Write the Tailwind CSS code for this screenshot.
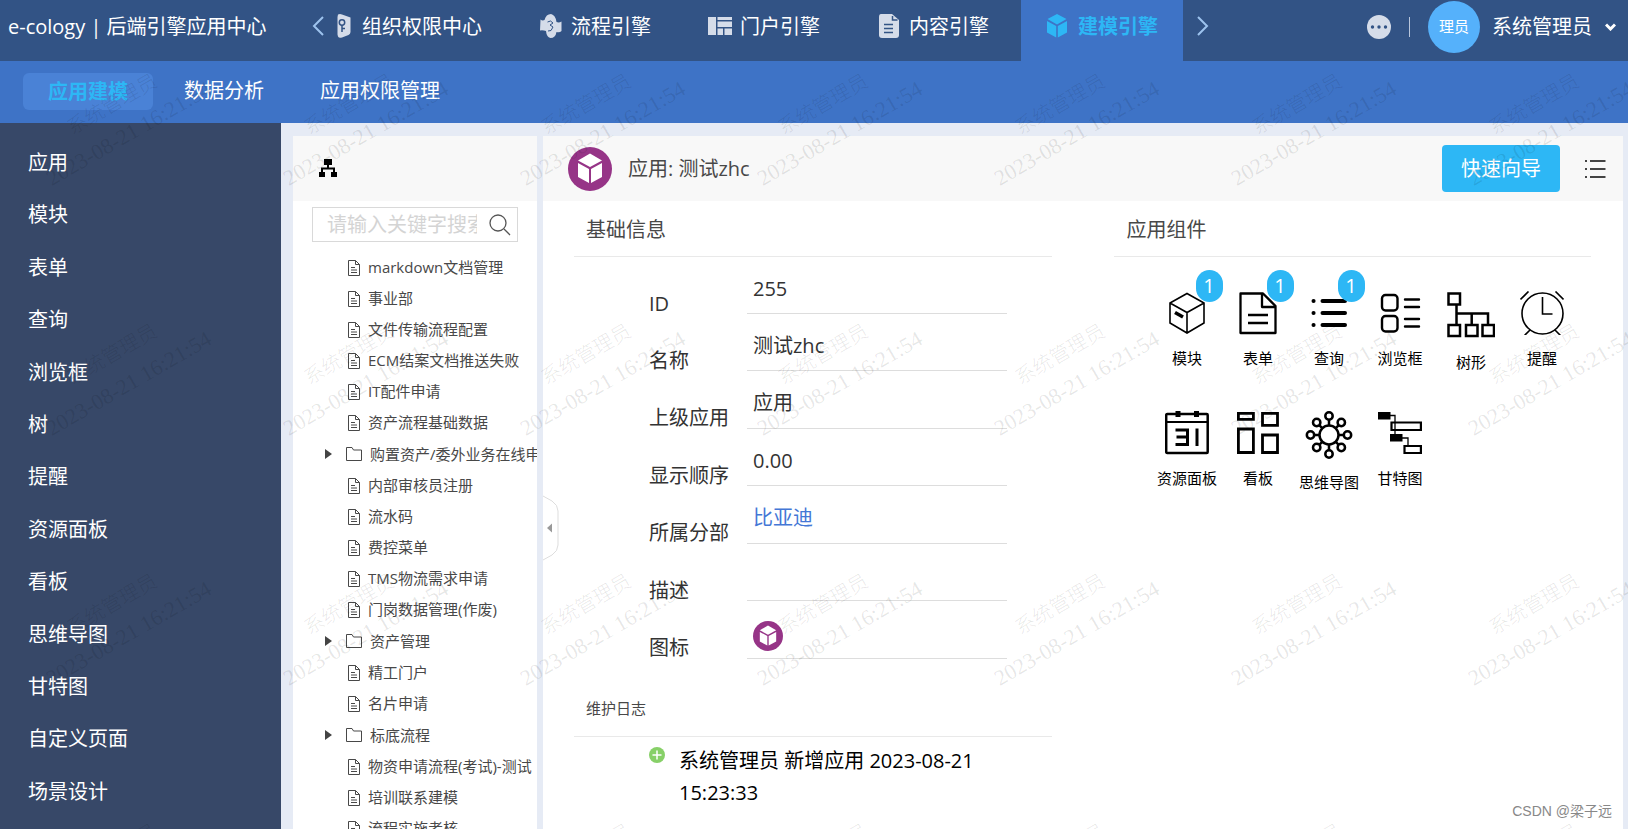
<!DOCTYPE html>
<html lang="zh-CN">
<head>
<meta charset="utf-8">
<meta name="viewport" content="width=device-width, initial-scale=1">
<title>e-cology | 后端引擎应用中心</title>
<script src="https://cdn.jsdelivr.net/npm/@tailwindcss/browser@4"></script>
</head>
<body class="relative flex h-screen flex-col overflow-hidden bg-[#e6ebf5] font-['Open_Sans','Noto_Sans_CJK_SC',sans-serif] text-xl text-[#333]">

<svg class="hidden" aria-hidden="true">
  <symbol id="doc" viewBox="0 0 12 16"><path d="M.5.5h7l4 4v11H.5zM7.5.5v4h4M3 7.5h4M3 10h6M3 12.5h6" fill="none" stroke="currentColor"/></symbol>
  <symbol id="folder" viewBox="0 0 16 14"><path d="M.5 13.500V.5h5.500l1.500 2.500h8v10.500z" fill="none" stroke="currentColor" stroke-linejoin="round"/></symbol>
  <symbol id="cube" viewBox="0 0 44 44"><circle cx="22" cy="22" r="22" fill="#963487"/><path d="M22 6.500 34 13.500 22 20 10 13.500zM10 16l11 6v14l-11-6zM34 16l-11 6v14l11-6z" fill="#fff"/></symbol>
</svg>

<header class="flex h-[61px] shrink-0 bg-[#325385] text-white">
  <h1 class="w-[306px] shrink-0 pl-2 leading-[54px] whitespace-nowrap">e-cology | 后端引擎应用中心</h1>
  <button type="button" aria-label="向左" class="flex h-[52px] w-6 shrink-0 items-center pl-1.5 text-[#9dc3ee]">
    <svg class="h-5 w-3" viewBox="0 0 12 20" fill="none" stroke="currentColor" stroke-width="2"><path d="M11 1 2 10l9 9"/></svg>
  </button>
  <nav class="flex shrink-0 gap-[7px] leading-[54px]">
    <a href="#" class="flex gap-2 pr-[25px]">
      <svg class="mt-[14px] size-6" viewBox="0 0 24 24"><path d="M8 .5q2-1 4 0l8.500 3V18q0 2-2 3L12 23.500q-3 1-4-1l-.5-2V3z" fill="#d5dce9"/><g fill="none" stroke="#325385" stroke-width="1.500"><circle cx="12" cy="8.500" r="2.700"/><path d="M12 11v7M12 14.500h3"/></g></svg>组织权限中心</a>
    <a href="#" class="flex gap-2 px-[25px]">
      <svg class="mt-[14px] size-6" viewBox="0 0 24 24"><path d="M1.500 5.500q2 1.500 4 .5Q7 0 12 0q4.500 1 5.500 8 2.500 1 5-.5V17q-2 2-5 1-1 6-6 6-4-1-4.500-7-3-1-6-.5z" fill="#d5dce9"/><path d="m8.500 8 3-1 2.500 2-3 2 3 2-2 3.500-3 .5" fill="none" stroke="#325385"/></svg>流程引擎</a>
    <a href="#" class="flex gap-2 px-[25px]">
      <svg class="mt-[14px] size-6" viewBox="0 0 24 24" fill="#d5dce9"><path d="M0 3h8v18H0zM9.500 3H24v3H9.500zM9.500 7.500H24V13H9.500zM9.500 14.500H15V21H9.500zM16.500 14.500H24V21h-7.500z"/></svg>门户引擎</a>
    <a href="#" class="flex gap-2 px-[25px]">
      <svg class="mt-[14px] size-6" viewBox="0 0 24 24"><path d="M4 0h11l7 6v15q0 3-3 3H5q-3 0-3-3V3q0-3 2-3z" fill="#d5dce9"/><path d="M15.500 2v4h5M7 10.500h9M7 14.500h9M7 18.500h9" fill="none" stroke="#325385" stroke-width="1.500"/></svg>内容引擎</a>
    <a href="#" aria-current="page" class="flex gap-2 bg-[#3e73c6] px-[25px] font-bold text-[#2db7f5]">
      <svg class="mt-[14px] size-6" viewBox="0 0 24 24" fill="currentColor"><path d="M11 0l9.500 5L11 10.500 1.500 5zM1 7l9.200 5v11.500L1 18.500zM21 7l-9.200 5v11.500l9.200-5z"/></svg>建模引擎</a>
  </nav>
  <button type="button" aria-label="向右" class="flex h-[52px] shrink-0 items-center pl-[14px] text-[#9dc3ee]">
    <svg class="h-5 w-3" viewBox="0 0 12 20" fill="none" stroke="currentColor" stroke-width="2"><path d="m1 1 9 9-9 9"/></svg>
  </button>
  <div class="ml-auto flex h-[53px] shrink-0 items-center pr-3">
    <button type="button" aria-label="更多"><svg class="size-6" viewBox="0 0 24 24"><circle cx="12" cy="12" r="12" fill="#d5dce9"/><g fill="#325385"><circle cx="5.500" cy="12" r="1.700"/><circle cx="12" cy="12" r="1.700"/><circle cx="18.500" cy="12" r="1.700"/></g></svg></button>
    <span class="mx-[18px] h-5 w-px bg-[#b9c6dc]"></span>
    <span class="mr-3 flex size-[52px] items-center justify-center rounded-full bg-[#55b1fb] text-[15px]">理员</span>
    <button type="button" class="flex items-center gap-[13px]">系统管理员
      <svg class="h-2 w-[11px]" viewBox="0 0 11 8" fill="none" stroke="#fff" stroke-width="3"><path d="m1 1.500 4.500 4.500L10 1.500"/></svg></button>
  </div>
</header>

<nav class="flex h-[62px] shrink-0 items-center gap-1.5 bg-[#3e73c6] pr-6 pb-0.5 pl-[23px] text-white">
  <a href="#" aria-current="page" class="rounded-md bg-[#4a82d6] px-[25px] leading-[37px] font-bold text-[#2db7f5]">应用建模</a>
  <a href="#" class="px-[25px]">数据分析</a>
  <a href="#" class="px-[25px]">应用权限管理</a>
</nav>

<div class="flex min-h-0 flex-1">
  <aside class="w-[281px] shrink-0 bg-[#374868] text-white">
    <nav class="flex h-full flex-col justify-between pt-[25px] pb-[22px] pl-7 leading-[30px]">
      <a href="#">应用</a><a href="#">模块</a><a href="#">表单</a><a href="#">查询</a><a href="#">浏览框</a><a href="#">树</a><a href="#">提醒</a><a href="#">资源面板</a><a href="#">看板</a><a href="#">思维导图</a><a href="#">甘特图</a><a href="#">自定义页面</a><a href="#">场景设计</a>
    </nav>
  </aside>

  <section class="mt-[13px] ml-3 flex w-[244px] shrink-0 flex-col overflow-hidden bg-white">
    <div class="flex h-[65px] shrink-0 items-center bg-[#f8f8f8] pb-0.5 pl-[26px]">
      <svg class="size-[18px] text-black" viewBox="0 0 18 18" fill="currentColor"><path d="M5 0h8v6h-3v2.500h6V13h2v5h-6v-5h2v-2.500H4V13h2v5H0v-5h2V8.500h6V6H5z"/></svg>
    </div>
    <div class="mx-[19px] mt-1.5 flex h-[35px] shrink-0 items-center border border-[#d9d9d9] pr-1.5 pl-[14px]">
      <input type="text" aria-label="搜索" placeholder="请输入关键字搜索" class="min-w-0 flex-1 outline-none placeholder:text-[#d4d4d4]">
      <button type="button" aria-label="搜索" class="pl-3"><svg class="size-[22px] text-[#555]" viewBox="0 0 22 22" fill="none" stroke="currentColor" stroke-width="1.300"><circle cx="9" cy="9" r="8"/><path d="m15 15 6 6"/></svg></button>
    </div>
    <ul class="mt-[10px] text-[15px] leading-[31px] whitespace-nowrap text-[#484848]">
      <li class="flex h-[31px] items-center gap-2 pl-[55px]"><svg class="h-4 w-3 shrink-0"><use href="#doc"/></svg>markdown文档管理</li>
      <li class="flex h-[31px] items-center gap-2 pl-[55px]"><svg class="h-4 w-3 shrink-0"><use href="#doc"/></svg>事业部</li>
      <li class="flex h-[31px] items-center gap-2 pl-[55px]"><svg class="h-4 w-3 shrink-0"><use href="#doc"/></svg>文件传输流程配置</li>
      <li class="flex h-[31px] items-center gap-2 pl-[55px]"><svg class="h-4 w-3 shrink-0"><use href="#doc"/></svg>ECM结案文档推送失败</li>
      <li class="flex h-[31px] items-center gap-2 pl-[55px]"><svg class="h-4 w-3 shrink-0"><use href="#doc"/></svg>IT配件申请</li>
      <li class="flex h-[31px] items-center gap-2 pl-[55px]"><svg class="h-4 w-3 shrink-0"><use href="#doc"/></svg>资产流程基础数据</li>
      <li class="flex h-8 items-center gap-2 pl-8"><svg class="mr-1.5 h-[10px] w-[7px] shrink-0" viewBox="0 0 7 10"><path d="m0 0 7 5-7 5z" fill="#444"/></svg><svg class="h-[14px] w-4 shrink-0"><use href="#folder"/></svg>购置资产/委外业务在线申请</li>
      <li class="flex h-[31px] items-center gap-2 pl-[55px]"><svg class="h-4 w-3 shrink-0"><use href="#doc"/></svg>内部审核员注册</li>
      <li class="flex h-[31px] items-center gap-2 pl-[55px]"><svg class="h-4 w-3 shrink-0"><use href="#doc"/></svg>流水码</li>
      <li class="flex h-[31px] items-center gap-2 pl-[55px]"><svg class="h-4 w-3 shrink-0"><use href="#doc"/></svg>费控菜单</li>
      <li class="flex h-[31px] items-center gap-2 pl-[55px]"><svg class="h-4 w-3 shrink-0"><use href="#doc"/></svg>TMS物流需求申请</li>
      <li class="flex h-[31px] items-center gap-2 pl-[55px]"><svg class="h-4 w-3 shrink-0"><use href="#doc"/></svg>门岗数据管理(作废)</li>
      <li class="flex h-8 items-center gap-2 pl-8"><svg class="mr-1.5 h-[10px] w-[7px] shrink-0" viewBox="0 0 7 10"><path d="m0 0 7 5-7 5z" fill="#444"/></svg><svg class="h-[14px] w-4 shrink-0"><use href="#folder"/></svg>资产管理</li>
      <li class="flex h-[31px] items-center gap-2 pl-[55px]"><svg class="h-4 w-3 shrink-0"><use href="#doc"/></svg>精工门户</li>
      <li class="flex h-[31px] items-center gap-2 pl-[55px]"><svg class="h-4 w-3 shrink-0"><use href="#doc"/></svg>名片申请</li>
      <li class="flex h-8 items-center gap-2 pl-8"><svg class="mr-1.5 h-[10px] w-[7px] shrink-0" viewBox="0 0 7 10"><path d="m0 0 7 5-7 5z" fill="#444"/></svg><svg class="h-[14px] w-4 shrink-0"><use href="#folder"/></svg>标底流程</li>
      <li class="flex h-[31px] items-center gap-2 pl-[55px]"><svg class="h-4 w-3 shrink-0"><use href="#doc"/></svg>物资申请流程(考试)-测试</li>
      <li class="flex h-[31px] items-center gap-2 pl-[55px]"><svg class="h-4 w-3 shrink-0"><use href="#doc"/></svg>培训联系建模</li>
      <li class="flex h-[31px] items-center gap-2 pl-[55px]"><svg class="h-4 w-3 shrink-0"><use href="#doc"/></svg>流程实施考核</li>
    </ul>
  </section>

  <main class="relative mt-[13px] mr-[5px] ml-1.5 min-w-0 flex-1 bg-white">
    <button type="button" aria-label="收起" class="absolute top-[359px] left-0">
      <svg class="h-[66px] w-4" viewBox="0 0 16 66"><path d="M0 1l9 5q6 4 6 10v34q0 6-6 10l-9 5" fill="#fff" stroke="#ddd"/><path d="M9 28.500v9L4 33z" fill="#999"/></svg>
    </button>
    <div class="flex h-[65px] items-center bg-[#f8f8f8] pr-[17px] pl-[25px] text-[#484848]">
      <svg class="mr-4 size-11"><use href="#cube"/></svg>
      <h2>应用: 测试zhc</h2>
      <button type="button" class="mr-[25px] ml-auto h-[47px] rounded-sm bg-[#2db7f5] px-[19px] text-white">快速向导</button>
      <button type="button" aria-label="列表"><svg class="h-[18px] w-[21px]" viewBox="0 0 21 18" fill="#444"><path d="M0 0h2v2H0zM5 0h15.500v2H5zM0 8h2v2H0zM5 8h15.500v2H5zM0 16h2v2H0zM5 16h15.500v2H5z"/></svg></button>
    </div>
    <div class="grid grid-cols-2 gap-[62px] pr-8 pl-[31px]">
      <div>
        <h3 class="h-14 border-b border-[#e9e9e9] pl-3 leading-[58px] text-[#484848]">基础信息</h3>
        <dl class="pr-[45px] pl-[75px]">
          <div class="flex h-[57px]"><dt class="w-[98px] pt-8 leading-[30px]">ID</dt><dd class="flex-1 border-b border-[#ddd] pt-[17px] pl-1.5 leading-[30px]">255</dd></div>
          <div class="flex h-[57px]"><dt class="w-[98px] pt-8 leading-[30px]">名称</dt><dd class="flex-1 border-b border-[#ddd] pt-[17px] pl-1.5 leading-[30px]">测试zhc</dd></div>
          <div class="flex h-[58px]"><dt class="w-[98px] pt-8 leading-[30px]">上级应用</dt><dd class="flex-1 border-b border-[#ddd] pt-[17px] pl-1.5 leading-[30px]">应用</dd></div>
          <div class="flex h-[57px]"><dt class="w-[98px] pt-8 leading-[30px]">显示顺序</dt><dd class="flex-1 border-b border-[#ddd] pt-[17px] pl-1.5 leading-[30px]">0.00</dd></div>
          <div class="flex h-[58px]"><dt class="w-[98px] pt-8 leading-[30px]">所属分部</dt><dd class="flex-1 border-b border-[#ddd] pt-[17px] pl-1.5 leading-[30px]"><a href="#" class="text-[#4477d6]">比亚迪</a></dd></div>
          <div class="flex h-[57px]"><dt class="w-[98px] pt-8 leading-[30px]">描述</dt><dd class="flex-1 border-b border-[#ddd]"></dd></div>
          <div class="flex h-[58px]"><dt class="w-[98px] pt-8 leading-[30px]">图标</dt><dd class="flex-1 border-b border-[#ddd] pt-5 pl-1.5"><svg class="size-[30px]" viewBox="0 0 44 44"><use href="#cube"/></svg></dd></div>
        </dl>
        <h3 class="mt-[22px] h-14 border-b border-[#e9e9e9] pl-3 text-[15px] leading-[54px] text-[#484848]">维护日志</h3>
        <div class="flex gap-[14px] pt-2 pr-[45px] pl-[75px] text-black">
          <svg class="mt-0.5 size-4 shrink-0" viewBox="0 0 16 16"><circle cx="8" cy="8" r="8" fill="#87d068"/><path d="M8 3.500v9M3.500 8h9" stroke="#fff" stroke-width="1.500"/></svg>
          <p class="leading-8">系统管理员 新增应用 2023-08-21 15:23:33</p>
        </div>
      </div>

      <div>
        <h3 class="h-14 border-b border-[#e9e9e9] pl-[13px] leading-[58px] text-[#484848]">应用组件</h3>
        <div class="flex flex-wrap pl-[38px] text-[15px] text-black">
          <a href="#" class="relative flex h-[120px] w-[71px] flex-col items-center gap-[11px] pt-[34px] leading-6 whitespace-nowrap">
            <svg class="size-11" viewBox="0 0 44 44" fill="none" stroke="currentColor" stroke-width="1.600"><path d="M22 2.500 39 12v20L22 42 5 32V12zM5 12l17 9.500L39 12M22 21.500V42"/><path d="m10 21.500 8 4.500" stroke-width="3.500"/></svg>模块
            <span class="absolute top-[13px] left-11 h-8 w-[27px] rounded-full bg-[#2db7f5] text-center text-xl leading-8 text-white">1</span></a>
          <a href="#" class="relative flex h-[120px] w-[71px] flex-col items-center gap-[11px] pt-[34px] leading-6 whitespace-nowrap">
            <svg class="size-11" viewBox="0 0 44 44" fill="none" stroke="currentColor" stroke-width="2.300" stroke-linejoin="round"><path d="M4.500 2.500H27L39.500 15v27h-35zM26 2.500v13.500h13.500M12 24h20M12 32h20"/></svg>表单
            <span class="absolute top-[13px] left-11 h-8 w-[27px] rounded-full bg-[#2db7f5] text-center text-xl leading-8 text-white">1</span></a>
          <a href="#" class="relative flex h-[120px] w-[71px] flex-col items-center gap-[11px] pt-[34px] leading-6 whitespace-nowrap">
            <svg class="size-11" viewBox="0 0 44 44" fill="none" stroke="currentColor" stroke-width="4" stroke-linecap="round"><path d="M15.500 10h22.500M15.500 22h22.500M15.500 34h22.500M6.500 10h.1M6.500 22h.1M6.500 34h.1"/></svg>查询
            <span class="absolute top-[13px] left-11 h-8 w-[27px] rounded-full bg-[#2db7f5] text-center text-xl leading-8 text-white">1</span></a>
          <a href="#" class="flex h-[120px] w-[71px] flex-col items-center gap-[11px] pt-[34px] leading-6 whitespace-nowrap">
            <svg class="size-11" viewBox="0 0 44 44" fill="none" stroke="currentColor" stroke-width="2.400" stroke-linecap="round"><rect x="4" y="4" width="15.500" height="15.500" rx="3.500"/><rect x="4" y="25" width="15.500" height="15.500" rx="3.500"/><path d="M27 8.500h14M27 16h14M27 28h14M27 35.500h14"/></svg>浏览框</a>
          <a href="#" class="flex h-[120px] w-[71px] flex-col items-center gap-[11px] pt-[34px] leading-6 whitespace-nowrap">
            <svg class="size-12" viewBox="0 0 48 48" fill="none" stroke="currentColor" stroke-width="2.500"><path d="M1.500 2.500H13v11H1.500zM1.500 34H13v11H1.500zM19 34h11.500v11H19zM35.500 34H47v11H35.500zM9.500 13.500V34M9.500 22.500H41V34M24.700 22.500V34"/></svg>树形</a>
          <a href="#" class="flex h-[120px] w-[71px] flex-col items-center gap-[11px] pt-[34px] leading-6 whitespace-nowrap">
            <svg class="size-11" viewBox="0 0 44 44" fill="none" stroke="currentColor" stroke-width="1.600"><circle cx="22.500" cy="22.500" r="20.500"/><path d="M22.500 6v17h10M.5 8.500l8-8M43.500 8.500l-8-8M10 39l-5.500 5.500M35 39l5.500 5.500"/></svg>提醒</a>
          <a href="#" class="flex h-[120px] w-[71px] flex-col items-center gap-[11px] pt-[34px] leading-6 whitespace-nowrap">
            <svg class="size-11" viewBox="0 0 44 44" fill="none" stroke="currentColor" stroke-width="2.500"><rect x="1.200" y="3" width="41.500" height="39" rx="1"/><path d="M1 11h42" stroke-width="1.800"/><path d="M13 0v6M31.500 0v6" stroke-width="5"/><path d="M10.500 19h12v14.500h-12M11.500 26h11M32 17.500V35" stroke-width="3"/></svg>资源面板</a>
          <a href="#" class="flex h-[120px] w-[71px] flex-col items-center gap-[11px] pt-[34px] leading-6 whitespace-nowrap">
            <svg class="size-11" viewBox="0 0 44 44" fill="none" stroke="currentColor" stroke-width="2.800"><path d="M2.400 2.400h15v6h-15zM26.500 2.400h15v12h-15zM2.400 18h15v23.500h-15zM26.500 24h15v17.500h-15z"/></svg>看板</a>
          <a href="#" class="flex h-[120px] w-[71px] flex-col items-center gap-[11px] pt-[34px] leading-6 whitespace-nowrap">
            <svg class="size-12" viewBox="0 0 48 48" fill="none" stroke="currentColor" stroke-width="2.500"><circle cx="24" cy="24" r="9.500"/><circle cx="24" cy="5" r="3.700"/><circle cx="24" cy="43" r="3.700"/><circle cx="5.500" cy="24" r="3.700"/><circle cx="42.500" cy="24" r="3.700"/><circle cx="11.700" cy="11.500" r="3.700"/><circle cx="36.300" cy="11.500" r="3.700"/><circle cx="11.700" cy="36.500" r="3.700"/><circle cx="36.300" cy="36.500" r="3.700"/><path d="M24 9v6M24 33v6M9 24h6M33 24h6M14.500 14.300l3 3M33.500 14.300l-3 3M14.500 33.700l3-3M33.500 33.700l-3-3"/></svg>思维导图</a>
          <a href="#" class="flex h-[120px] w-[71px] flex-col items-center gap-[11px] pt-[34px] leading-6 whitespace-nowrap">
            <svg class="size-11" viewBox="0 0 44 44" fill="none" stroke="currentColor" stroke-width="2.200"><path d="M0 1h12.500v7.500H0zM12 23h12.500v7.500H12z" fill="currentColor" stroke="none"/><path d="M12 4.500h5V23M24 27h6v7" stroke-width="1.300"/><path d="M13.500 11.500h29.400v7.500H13.500zM26.500 35h16.400v7H26.500z"/></svg>甘特图</a>
        </div>
      </div>
    </div>
  </main>
</div>

<!-- Repeating user / time watermark over the workspace -->
<div aria-hidden="true" class="pointer-events-none absolute inset-0 overflow-hidden">
  <div id="marks-grid" class="-mt-[7px] ml-[2px] grid auto-rows-[250px] grid-cols-[repeat(7,237px)]"></div>
</div>
<template id="mark"><div class="flex items-center justify-center"><p class="-rotate-30 text-center leading-[34px] font-light whitespace-nowrap text-black/10"><span class="font-['Noto_Sans_CJK_SC',sans-serif]">系统管理员</span><br><span class="font-['Liberation_Serif',serif] text-[22px]">2023-08-21 16:21:54</span></p></div></template>
<script>
  const grid = document.getElementById('marks-grid');
  const mark = document.getElementById('mark');
  for (let i = 0; i < 28; i++) grid.append(mark.content.cloneNode(true));
</script>
<p class="absolute right-4 bottom-1.5 font-['Liberation_Sans','Noto_Sans_CJK_SC',sans-serif] text-sm leading-6 text-[#888]">CSDN @梁子远</p>
</body>
</html>
